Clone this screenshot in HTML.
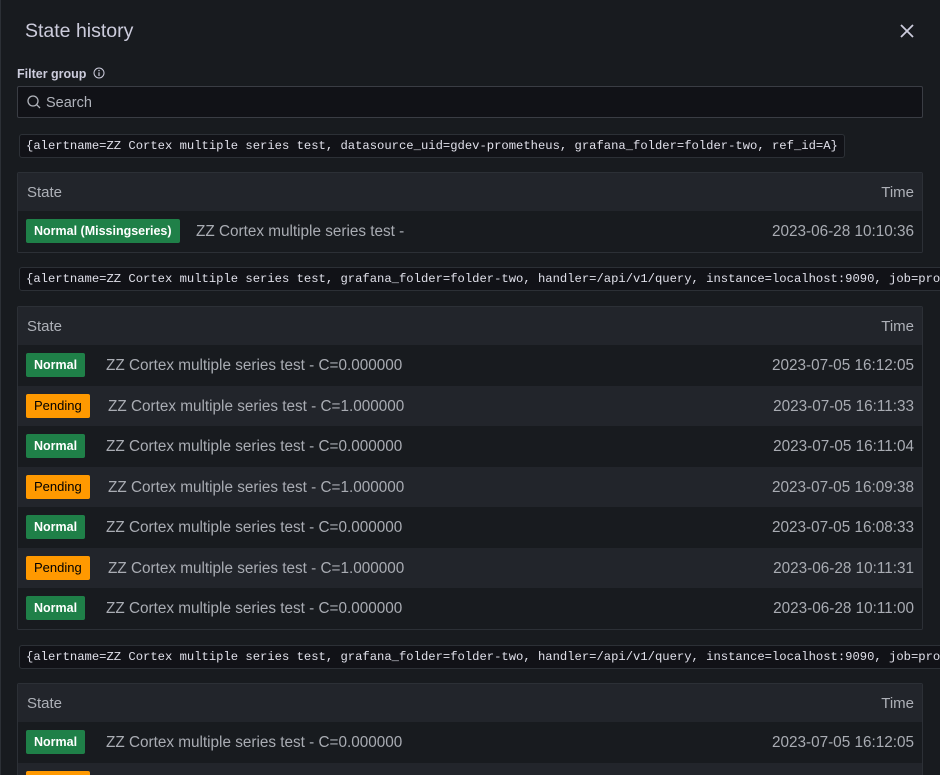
<!DOCTYPE html><html style="overflow:hidden;height:775px"><head><style>
body{margin:0;width:940px;height:775px;overflow:hidden;background:#181b1f;font-family:"Liberation Sans",sans-serif;color:#ccccdc;position:relative}
#w{position:absolute;left:0;top:0;width:940px;height:775px;overflow:hidden}
.edge{position:absolute;left:0;top:0;width:1px;height:775px;background:#2c3036}
.title{position:absolute;left:25px;top:20px;font-size:19.5px;color:#ccccdc}
.x{position:absolute;left:898px;top:22px}
.lbl{position:absolute;left:17px;top:67px;font-size:12.5px;font-weight:bold;color:#ccccdc}
.search{position:absolute;left:17px;top:86px;width:904px;height:30px;background:#111217;border:1px solid #3a3d44;border-radius:2px}
.search span{position:absolute;left:28px;top:8px;font-size:14.5px;color:#b0b3bb}
.code{position:absolute;left:19px;height:22px;line-height:22px;padding:0 6px;background:#111217;border:1px solid #2c3036;border-radius:3px;font-family:"Liberation Mono",monospace;font-size:12.2px;color:#e0e0ea;white-space:nowrap}
.cw{position:absolute;left:0;width:940px;height:26px;overflow:hidden}
.cw .code{top:0}
.tbl{position:absolute;left:17px;width:904px;border:1px solid #2c3036;border-radius:2px;overflow:hidden}
.hd{height:38px;background:#22252b;position:relative;font-size:15px;color:#aeb1b8}
.hd .a{position:absolute;left:9px;top:11px}.hd .b{position:absolute;right:8px;top:11px}
.r{height:40.5px;position:relative;font-size:15.3px;color:#a9acb3}
.bd{position:absolute;left:8px;top:8px;height:24px;line-height:24px;padding:0 8px;border-radius:2px;font-size:12.5px;font-weight:bold}
.n{background:#1f8048;color:#fff}.p{background:#ff9900;color:#000;font-weight:normal;font-size:13px}
.t{position:absolute;top:12px;white-space:nowrap}.tm{position:absolute;right:8px;top:12px}
</style></head><body><div id="w">
<div class="edge"></div>
<div class="title">State history</div>
<svg class="x" width="18" height="18" viewBox="0 0 18 18"><path d="M3 3L15 15M15 3L3 15" stroke="#ccccdc" stroke-width="1.8"/></svg>
<div class="lbl">Filter group <svg width="12" height="12" viewBox="0 0 12 12" style="vertical-align:-1px;margin-left:3px"><circle cx="6" cy="6" r="5" fill="none" stroke="#ccccdc" stroke-width="1"/><path d="M6 5.3V9" stroke="#ccccdc" stroke-width="1.2"/><circle cx="6" cy="3.6" r=".7" fill="#ccccdc"/></svg></div>
<div class="search"><svg style="position:absolute;left:9px;top:8px" width="14" height="14" viewBox="0 0 14 14"><circle cx="6" cy="6" r="5" fill="none" stroke="#b0b3bb" stroke-width="1.3"/><path d="M9.7 9.7L13 13" stroke="#b0b3bb" stroke-width="1.3"/></svg><span>Search</span></div>
<div class="cw" style="top:134px"><div class="code">{alertname=ZZ Cortex multiple series test, datasource_uid=gdev-prometheus, grafana_folder=folder-two, ref_id=A}</div></div>
<div class="tbl" style="top:172px"><div class="hd"><span class="a">State</span><span class="b">Time</span></div>
<div><div class="r" style="background:#181b1f"><span class="bd n">Normal (Missingseries)</span><span class="t" style="left:178px">ZZ Cortex multiple series test -</span><span class="tm">2023-06-28 10:10:36</span></div></div></div>
<div class="cw" style="top:267px"><div class="code">{alertname=ZZ Cortex multiple series test, grafana_folder=folder-two, handler=/api/v1/query, instance=localhost:9090, job=prometheus}</div></div>
<div class="tbl" style="top:306px"><div class="hd"><span class="a">State</span><span class="b">Time</span></div>
<div>
<div class="r" style="background:#181b1f"><span class="bd n">Normal</span><span class="t" style="left:88px">ZZ Cortex multiple series test - C=0.000000</span><span class="tm">2023-07-05 16:12:05</span></div>
<div class="r" style="background:#22252b"><span class="bd p">Pending</span><span class="t" style="left:90px">ZZ Cortex multiple series test - C=1.000000</span><span class="tm">2023-07-05 16:11:33</span></div>
<div class="r" style="background:#181b1f"><span class="bd n">Normal</span><span class="t" style="left:88px">ZZ Cortex multiple series test - C=0.000000</span><span class="tm">2023-07-05 16:11:04</span></div>
<div class="r" style="background:#22252b"><span class="bd p">Pending</span><span class="t" style="left:90px">ZZ Cortex multiple series test - C=1.000000</span><span class="tm">2023-07-05 16:09:38</span></div>
<div class="r" style="background:#181b1f"><span class="bd n">Normal</span><span class="t" style="left:88px">ZZ Cortex multiple series test - C=0.000000</span><span class="tm">2023-07-05 16:08:33</span></div>
<div class="r" style="background:#22252b"><span class="bd p">Pending</span><span class="t" style="left:90px">ZZ Cortex multiple series test - C=1.000000</span><span class="tm">2023-06-28 10:11:31</span></div>
<div class="r" style="background:#181b1f"><span class="bd n">Normal</span><span class="t" style="left:88px">ZZ Cortex multiple series test - C=0.000000</span><span class="tm">2023-06-28 10:11:00</span></div>
</div></div>
<div class="cw" style="top:645px"><div class="code">{alertname=ZZ Cortex multiple series test, grafana_folder=folder-two, handler=/api/v1/query, instance=localhost:9090, job=prometheus}</div></div>
<div class="tbl" style="top:683px;height:100px"><div class="hd"><span class="a">State</span><span class="b">Time</span></div>
<div>
<div class="r" style="background:#181b1f"><span class="bd n">Normal</span><span class="t" style="left:88px">ZZ Cortex multiple series test - C=0.000000</span><span class="tm">2023-07-05 16:12:05</span></div>
<div class="r" style="background:#22252b"><span class="bd p">Pending</span><span class="t" style="left:90px">ZZ Cortex multiple series test - C=1.000000</span><span class="tm">2023-07-05 16:11:33</span></div>
</div></div>
</div></body></html>
